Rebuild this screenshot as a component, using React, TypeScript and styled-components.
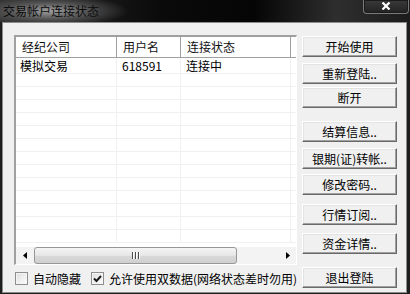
import styled, { createGlobalStyle } from 'styled-components';

const GlobalStyle = createGlobalStyle`
  html, body {
    margin: 0;
    padding: 0;
    background: #1e1e1e;
  }
  body {
    font-family: "Noto Sans CJK SC", "Noto Sans", sans-serif;
    font-size: 12px;
    color: #000;
  }
`;

const columns = [
  { title: '经纪公司', width: 101 },
  { title: '用户名', width: 64 },
  { title: '连接状态', width: 110 },
];

const rows = [['模拟交易', '618591', '连接中']];
const EMPTY_ROWS = 13;

const buttons = [
  { label: '开始使用', gap: 1 },
  { label: '重新登陆..', gap: 6 },
  { label: '断开', gap: 3 },
  { label: '结算信息..', gap: 13 },
  { label: '银期(证)转帐..', gap: 6 },
  { label: '修改密码..', gap: 5 },
  { label: '行情订阅..', gap: 9 },
  { label: '资金详情..', gap: 8 },
  { label: '退出登陆', gap: 13 },
];

export default function App() {
  return (
    <>
      <GlobalStyle />
      <Window>
        <TitleBar>
          <Title>交易帐户连接状态</Title>
          <CloseButton>
            <svg width="10" height="8" viewBox="0 0 10 8">
              <path d="M1.5 0.5 L8.5 7.5 M8.5 0.5 L1.5 7.5" stroke="#fff" strokeWidth="2.2" />
            </svg>
          </CloseButton>
        </TitleBar>
        <Frame>
          <Client>
            <LeftCol>
              <List>
                <Header>
                  {columns.map((c) => (
                    <HeaderCell key={c.title} $w={c.width}>
                      {c.title}
                    </HeaderCell>
                  ))}
                  <HeaderFill />
                </Header>
                <Rows>
                  {rows.map((r, i) => (
                    <Row key={i} $h={15}>
                      {r.map((v, j) => (
                        <Cell key={j} $w={columns[j].width} $pad={j === 0 ? 4 : 5}>
                          {v}
                        </Cell>
                      ))}
                      <CellFill />
                    </Row>
                  ))}
                  {Array.from({ length: EMPTY_ROWS }).map((_, i) => (
                    <Row key={'e' + i} $h={12}>
                      {columns.map((c) => (
                        <Cell key={c.title} $w={c.width} $pad={5} />
                      ))}
                      <CellFill />
                    </Row>
                  ))}
                </Rows>
                <HScroll>
                  <ArrowBtn>
                    <svg width="4" height="7" viewBox="0 0 4 7">
                      <path d="M4 0 L0 3.5 L4 7 Z" fill="#000" />
                    </svg>
                  </ArrowBtn>
                  <Track>
                    <Thumb>
                      <Grip>
                        <i />
                        <i />
                        <i />
                      </Grip>
                    </Thumb>
                  </Track>
                  <ArrowBtn>
                    <svg width="4" height="7" viewBox="0 0 4 7">
                      <path d="M0 0 L4 3.5 L0 7 Z" fill="#000" />
                    </svg>
                  </ArrowBtn>
                </HScroll>
              </List>
              <Options>
                <Check>
                  <Box />
                  <span>自动隐藏</span>
                </Check>
                <Check $gap={10}>
                  <Box>
                    <svg width="9" height="8" viewBox="0 0 9 8">
                      <path d="M1 3.5 L3.5 6 L8 1" stroke="#1a1a1a" strokeWidth="2" fill="none" />
                    </svg>
                  </Box>
                  <span>允许使用双数据(网络状态差时勿用)</span>
                </Check>
              </Options>
            </LeftCol>
            <RightCol>
              {buttons.map((b) => (
                <Button key={b.label} $gap={b.gap}>
                  {b.label}
                </Button>
              ))}
            </RightCol>
          </Client>
        </Frame>
      </Window>
    </>
  );
}

const Window = styled.div`
  width: 410px;
  height: 294px;
  display: flex;
  flex-direction: column;
  background: #1e1e1e;
  overflow: hidden;
`;

const TitleBar = styled.div`
  height: 22px;
  flex-shrink: 0;
  display: flex;
  justify-content: space-between;
  align-items: flex-start;
  background:
    radial-gradient(ellipse 78px 16px at 50px 11px, rgba(165, 165, 165, 0.95), rgba(120, 120, 120, 0.5) 55%, rgba(60, 60, 60, 0) 100%),
    linear-gradient(90deg, #2c2c2c 0%, #0a0a0a 40%, #050505 62%, #2e2e2e 82%, #1c1c1c 100%);
`;

const Title = styled.span`
  padding: 3px 0 0 3px;
  font-size: 12px;
  line-height: 16px;
  color: #0c0c0c;
`;

const CloseButton = styled.div`
  width: 46px;
  height: 14px;
  margin-right: 1px;
  display: flex;
  justify-content: center;
  padding-top: 2px;
  box-sizing: border-box;
  border: 1px solid #7a7a7a;
  border-top: none;
  border-radius: 0 0 4px 4px;
  box-shadow: inset 0 0 0 1px #1a1a1a;
  background: linear-gradient(#3a3a3a, #222);
`;

const Frame = styled.div`
  flex: 1;
  display: flex;
  padding: 0 3px 1px 2px;
`;

const Client = styled.div`
  flex: 1;
  display: flex;
  gap: 5px;
  padding: 12px 0 0 11px;
  background: #f0f0f0;
  border: 1px solid #8c8c8c;
`;

const LeftCol = styled.div`
  width: 283px;
  display: flex;
  flex-direction: column;
`;

const List = styled.div`
  height: 230px;
  box-sizing: border-box;
  display: flex;
  flex-direction: column;
  background: #fff;
  border-style: solid;
  border-width: 2px 1px 1px 2px;
  border-color: #a0a0a0 #fff #fff #a0a0a0;
  overflow: hidden;
`;

const Header = styled.div`
  height: 21px;
  flex-shrink: 0;
  display: flex;
  box-sizing: border-box;
  border-bottom: 1px solid #a0a0a0;
`;

const HeaderCell = styled.div<{ $w: number }>`
  width: ${(p) => p.$w}px;
  flex-shrink: 0;
  box-sizing: border-box;
  padding-left: 6px;
  border-right: 1px solid #a0a0a0;
  line-height: 20px;
  color: #111;
  white-space: nowrap;
`;

const HeaderFill = styled.div`
  flex: 1;
`;

const Rows = styled.div`
  flex: 1;
  overflow: hidden;
`;

const Row = styled.div<{ $h: number }>`
  display: flex;
  height: ${(p) => p.$h + 1}px;
  box-sizing: border-box;
  border-bottom: 1px solid #f0f0f0;
`;

const Cell = styled.div<{ $w: number; $pad: number }>`
  width: ${(p) => p.$w}px;
  flex-shrink: 0;
  box-sizing: border-box;
  padding-left: ${(p) => p.$pad}px;
  border-right: 1px solid #f0f0f0;
  line-height: 15px;
  white-space: nowrap;
`;

const CellFill = styled.div`
  flex: 1;
`;

const HScroll = styled.div`
  height: 17px;
  flex-shrink: 0;
  display: flex;
  background: #f3f3f3;
`;

const ArrowBtn = styled.div`
  width: 17px;
  display: flex;
  align-items: center;
  justify-content: center;
`;

const Track = styled.div`
  flex: 1;
  display: flex;
  padding-left: 1px;
`;

const Thumb = styled.div`
  width: 203px;
  box-sizing: border-box;
  border: 1px solid #979797;
  border-radius: 3px;
  background: linear-gradient(#f5f5f5, #e6e6e6 50%, #d8d8d8 51%, #d0d0d0);
  display: flex;
  align-items: center;
  justify-content: center;
`;

const Grip = styled.div`
  display: flex;
  gap: 2px;
  i {
    width: 1px;
    height: 7px;
    background: #4a4a4a;
    box-shadow: 1px 0 #fff;
  }
`;

const Options = styled.div`
  display: flex;
  align-items: center;
  height: 13px;
  margin-top: 7px;
  padding-left: 1px;
`;

const Check = styled.label<{ $gap?: number }>`
  display: flex;
  align-items: center;
  gap: 5px;
  margin-left: ${(p) => p.$gap ?? 0}px;
  line-height: 13px;
  white-space: nowrap;
`;

const Box = styled.span`
  width: 13px;
  height: 13px;
  box-sizing: border-box;
  border: 1px solid #8e8f8f;
  background: linear-gradient(135deg, #dcdcdc, #fff);
  box-shadow: inset 0 0 0 1px #f4f4f4;
  display: flex;
  align-items: center;
  justify-content: center;
`;

const RightCol = styled.div`
  width: 95px;
  display: flex;
  flex-direction: column;
`;

const Button = styled.div<{ $gap: number }>`
  height: 21px;
  margin-top: ${(p) => p.$gap}px;
  box-sizing: border-box;
  display: flex;
  align-items: center;
  justify-content: center;
  background: #f0f0f0;
  border: 1px solid;
  border-color: #fff #696969 #696969 #fff;
  box-shadow: inset -1px -1px #a0a0a0, inset 1px 1px #e3e3e3;
  line-height: 19px;
  white-space: nowrap;
`;
